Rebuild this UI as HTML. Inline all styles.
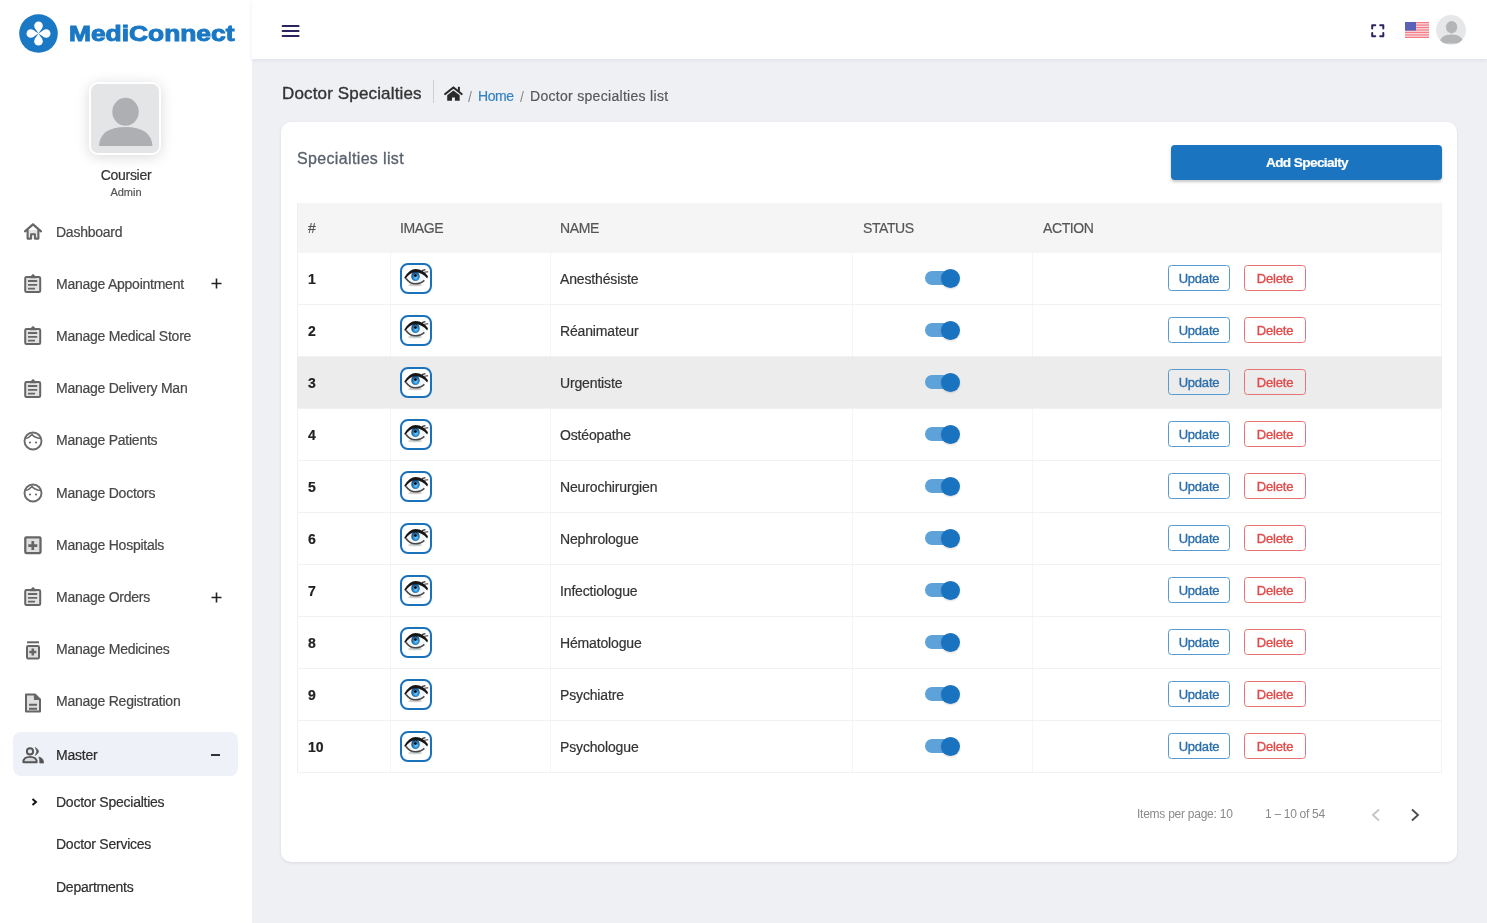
<!DOCTYPE html>
<html><head><meta charset="utf-8"><title>MediConnect - Doctor Specialties</title><style>
*{margin:0;padding:0;box-sizing:border-box}
html,body{width:1487px;height:923px;overflow:hidden;background:#eef0f4;font-family:"Liberation Sans", sans-serif}
.t{position:absolute;line-height:1;white-space:nowrap;will-change:transform;-webkit-text-stroke-width:0.2px}
.a{position:absolute;display:block}
.box{position:absolute}
</style></head>
<body>
<div class="box" style="left:0;top:0;width:252px;height:923px;background:#fff;box-shadow:1px 0 0 #f1f1f4"></div>
<div class="box" style="left:252px;top:0;width:1235px;height:59px;background:#fff;box-shadow:0 1px 4px rgba(90,90,170,.11)"></div>
<svg class="a" style="left:19px;top:14px" width="39" height="39" viewBox="0 0 39 39"><circle cx="19.5" cy="19.5" r="19.3" fill="#1a78c4"/><g fill="#fff"><circle cx="19.50" cy="11.80" r="4.3"/><path d="M19.5 19.5 L23.07 14.20 L19.50 11.80 L15.93 14.20 Z"/><circle cx="27.20" cy="19.50" r="4.3"/><path d="M19.5 19.5 L24.80 23.07 L27.20 19.50 L24.80 15.93 Z"/><circle cx="19.50" cy="27.20" r="4.3"/><path d="M19.5 19.5 L15.93 24.80 L19.50 27.20 L23.07 24.80 Z"/><circle cx="11.80" cy="19.50" r="4.3"/><path d="M19.5 19.5 L14.20 15.93 L11.80 19.50 L14.20 23.07 Z"/></g></svg>
<div class="t" style="left:69px;top:22.68px;font-size:22px;color:#1a78c4;font-weight:700;transform:scaleX(1.198);transform-origin:0 0;-webkit-text-stroke:1px #1a78c4;">MediConnect</div>
<div class="box" style="left:89.3px;top:82.2px;width:71.5px;height:73px;border-radius:9px;background:#e4e5e7;border:2.6px solid #fff;box-shadow:0 2px 14px rgba(0,0,0,.15);overflow:hidden">
<svg class="a" style="left:0.7px;top:0.3px" width="67" height="67" viewBox="0 0 67 67"><ellipse cx="33.5" cy="27.8" rx="13.2" ry="14" fill="#adafb2"/><path d="M7 62 Q8 43 33.5 43 Q59 43 60.5 62 Z" fill="#adafb2"/></svg></div>
<div class="t" style="left:-74.4px;width:400px;text-align:center;top:167.75px;font-size:14px;color:#333;font-weight:400;letter-spacing:-0.3px;">Coursier</div>
<div class="t" style="left:-74.4px;width:400px;text-align:center;top:187.19px;font-size:11px;color:#555;font-weight:400;">Admin</div>
<svg class="a" style="left:24px;top:223px" width="18" height="17" viewBox="0 0 18 17"><path d="M9 1.4 L1 8.4 M9 1.4 L17 8.4" stroke="#666" stroke-width="2.2" fill="none" stroke-linecap="round"/><path d="M3.6 7 V15.6 H7.1 V11.2 H10.9 V15.6 H14.4 V7" stroke="#666" stroke-width="2.1" fill="#e4e4e4" stroke-linejoin="round"/></svg>
<div class="t" style="left:55.9px;top:224.85px;font-size:14px;color:#474747;font-weight:400;letter-spacing:-0.25px;">Dashboard</div>
<svg class="a" style="left:24px;top:274px" width="18" height="20" viewBox="0 0 18 20"><rect x="1.2" y="3.1" width="15" height="14.9" rx="1.3" stroke="#666" stroke-width="2" fill="#e2e2e2"/><path d="M6 3.6 L9 0.7 L12 3.6 Z" stroke="#666" stroke-width="1.2" fill="#666" stroke-linejoin="round"/><path d="M4 7 H13.2 M4 10.8 H13.2 M4 14.6 H11" stroke="#666" stroke-width="1.8"/></svg>
<div class="t" style="left:55.9px;top:276.75px;font-size:14px;color:#474747;font-weight:400;letter-spacing:-0.25px;">Manage Appointment</div>
<svg class="a" style="left:211px;top:278.4px" width="11" height="11" viewBox="0 0 11 11"><path d="M5.5 0.5 V10.5 M0.5 5.5 H10.5" stroke="#222" stroke-width="1.6"/></svg>
<svg class="a" style="left:24px;top:326.3px" width="18" height="20" viewBox="0 0 18 20"><rect x="1.2" y="3.1" width="15" height="14.9" rx="1.3" stroke="#666" stroke-width="2" fill="#e2e2e2"/><path d="M6 3.6 L9 0.7 L12 3.6 Z" stroke="#666" stroke-width="1.2" fill="#666" stroke-linejoin="round"/><path d="M4 7 H13.2 M4 10.8 H13.2 M4 14.6 H11" stroke="#666" stroke-width="1.8"/></svg>
<div class="t" style="left:55.9px;top:329.05px;font-size:14px;color:#474747;font-weight:400;letter-spacing:-0.25px;">Manage Medical Store</div>
<svg class="a" style="left:24px;top:378.5px" width="18" height="20" viewBox="0 0 18 20"><rect x="1.2" y="3.1" width="15" height="14.9" rx="1.3" stroke="#666" stroke-width="2" fill="#e2e2e2"/><path d="M6 3.6 L9 0.7 L12 3.6 Z" stroke="#666" stroke-width="1.2" fill="#666" stroke-linejoin="round"/><path d="M4 7 H13.2 M4 10.8 H13.2 M4 14.6 H11" stroke="#666" stroke-width="1.8"/></svg>
<div class="t" style="left:55.9px;top:381.25px;font-size:14px;color:#474747;font-weight:400;letter-spacing:-0.25px;">Manage Delivery Man</div>
<svg class="a" style="left:23px;top:430.5px" width="20" height="20" viewBox="0 0 20 20"><circle cx="10" cy="10" r="8.5" stroke="#6b6b6b" stroke-width="1.9" fill="none"/><path d="M2.5 7.5 Q6 7 9 3.5 Q12 7 17.5 7.5" stroke="#6b6b6b" stroke-width="1.7" fill="none"/><circle cx="7" cy="11.5" r="1.1" fill="#6b6b6b"/><circle cx="13" cy="11.5" r="1.1" fill="#6b6b6b"/></svg>
<div class="t" style="left:55.9px;top:433.35px;font-size:14px;color:#474747;font-weight:400;letter-spacing:-0.25px;">Manage Patients</div>
<svg class="a" style="left:23px;top:482.7px" width="20" height="20" viewBox="0 0 20 20"><circle cx="10" cy="10" r="8.5" stroke="#6b6b6b" stroke-width="1.9" fill="none"/><path d="M2.5 7.5 Q6 7 9 3.5 Q12 7 17.5 7.5" stroke="#6b6b6b" stroke-width="1.7" fill="none"/><circle cx="7" cy="11.5" r="1.1" fill="#6b6b6b"/><circle cx="13" cy="11.5" r="1.1" fill="#6b6b6b"/></svg>
<div class="t" style="left:55.9px;top:485.55px;font-size:14px;color:#474747;font-weight:400;letter-spacing:-0.25px;">Manage Doctors</div>
<svg class="a" style="left:24px;top:536px" width="18" height="19" viewBox="0 0 18 19"><rect x="1.3" y="1.3" width="15.2" height="15.8" rx="1" stroke="#666" stroke-width="2.3" fill="#e0e0e0"/><path d="M8.8 5 V14 M4.3 9.6 H13.3" stroke="#666" stroke-width="2.7"/></svg>
<div class="t" style="left:55.9px;top:537.75px;font-size:14px;color:#474747;font-weight:400;letter-spacing:-0.25px;">Manage Hospitals</div>
<svg class="a" style="left:24px;top:587.2px" width="18" height="20" viewBox="0 0 18 20"><rect x="1.2" y="3.1" width="15" height="14.9" rx="1.3" stroke="#666" stroke-width="2" fill="#e2e2e2"/><path d="M6 3.6 L9 0.7 L12 3.6 Z" stroke="#666" stroke-width="1.2" fill="#666" stroke-linejoin="round"/><path d="M4 7 H13.2 M4 10.8 H13.2 M4 14.6 H11" stroke="#666" stroke-width="1.8"/></svg>
<div class="t" style="left:55.9px;top:589.95px;font-size:14px;color:#474747;font-weight:400;letter-spacing:-0.25px;">Manage Orders</div>
<svg class="a" style="left:211px;top:591.6px" width="11" height="11" viewBox="0 0 11 11"><path d="M5.5 0.5 V10.5 M0.5 5.5 H10.5" stroke="#222" stroke-width="1.6"/></svg>
<svg class="a" style="left:24px;top:640px" width="18" height="20" viewBox="0 0 18 20"><path d="M3 2.3 H15" stroke="#666" stroke-width="2"/><rect x="3" y="6.1" width="12" height="12.4" rx="1.2" stroke="#666" stroke-width="2" fill="#e0e0e0"/><path d="M8.8 8.6 V15.6 M5.3 12.1 H12.3" stroke="#666" stroke-width="2.5"/></svg>
<div class="t" style="left:55.9px;top:642.35px;font-size:14px;color:#474747;font-weight:400;letter-spacing:-0.25px;">Manage Medicines</div>
<svg class="a" style="left:24px;top:692.5px" width="18" height="20" viewBox="0 0 18 20"><path d="M2 1.5 H11 L16 6.5 V18.5 H2 Z" stroke="#666" stroke-width="2" fill="#e0e0e0" stroke-linejoin="round"/><path d="M10.7 1.8 V6.3 H15.7 Z" stroke="#666" stroke-width="1.6" fill="#666" stroke-linejoin="round"/><path d="M5 11.8 H13 M5 15.7 H13" stroke="#666" stroke-width="2"/></svg>
<div class="t" style="left:55.9px;top:694.35px;font-size:14px;color:#474747;font-weight:400;letter-spacing:-0.25px;">Manage Registration</div>
<div class="box" style="left:13px;top:732px;width:225px;height:44px;border-radius:8px;background:#eff1f9"></div>
<svg class="a" style="left:21px;top:746px" width="24" height="18" viewBox="0 0 24 18"><circle cx="9" cy="5.4" r="3.1" stroke="#555" stroke-width="1.9" fill="#e6e7ee"/><path d="M2.4 16.3 Q2.2 10.9 9 10.9 Q15.8 10.9 15.7 16.3 Z" stroke="#555" stroke-width="1.9" fill="#d8d9de" stroke-linejoin="round"/><path d="M14.4 1.5 Q20.6 5.4 14.4 9.3 Q17.2 5.4 14.4 1.5 Z" fill="#555" stroke="#555" stroke-width="0.8" stroke-linejoin="round"/><path d="M17.8 11 Q22.8 12 22.6 17.1 H18.7 Q18.9 13.6 17.8 11 Z" fill="#555" stroke="#555" stroke-width="0.6" stroke-linejoin="round"/></svg>
<div class="t" style="left:55.9px;top:747.65px;font-size:14px;color:#2a2a2a;font-weight:400;letter-spacing:-0.2px;">Master</div>
<div class="box" style="left:211px;top:754.2px;width:9px;height:1.7px;background:#333"></div>
<svg class="a" style="left:30.5px;top:798px" width="7" height="8" viewBox="0 0 7 8"><path d="M1.5 1 L5 4 L1.5 7" stroke="#111" stroke-width="1.9" fill="none"/></svg>
<div class="t" style="left:55.9px;top:794.75px;font-size:14px;color:#2f2f2f;font-weight:400;letter-spacing:-0.25px;">Doctor Specialties</div>
<div class="t" style="left:55.9px;top:837.35px;font-size:14px;color:#2f2f2f;font-weight:400;letter-spacing:-0.25px;">Doctor Services</div>
<div class="t" style="left:55.9px;top:879.65px;font-size:14px;color:#2f2f2f;font-weight:400;letter-spacing:-0.25px;">Departments</div>
<svg class="a" style="left:281px;top:24px" width="19" height="14" viewBox="0 0 19 14"><path d="M1.6 2.1 H17.6 M1.6 7 H17.6 M1.6 11.9 H17.6" stroke="#2a2560" stroke-width="2" stroke-linecap="round"/></svg>
<svg class="a" style="left:1370.5px;top:23.5px" width="14" height="14" viewBox="0 0 14 14"><path d="M1.2 4.4 V1.2 H4.3 M9.2 1.2 H12.3 V4.4 M12.3 9.0 V12.3 H9.2 M4.3 12.3 H1.2 V9.0" stroke="#2a2660" stroke-width="2" fill="none" stroke-linecap="round" stroke-linejoin="round"/></svg>
<svg class="a" style="left:1405px;top:22px" width="24" height="16" viewBox="0 0 24 16"><rect width="24" height="16" fill="#fbdde0"/><rect y="0.000" width="24" height="1.231" fill="#f27d87"/><rect y="2.462" width="24" height="1.231" fill="#f27d87"/><rect y="4.923" width="24" height="1.231" fill="#f27d87"/><rect y="7.385" width="24" height="1.231" fill="#f27d87"/><rect y="9.846" width="24" height="1.231" fill="#f27d87"/><rect y="12.308" width="24" height="1.231" fill="#f27d87"/><rect y="14.769" width="24" height="1.231" fill="#f27d87"/><rect width="11" height="8.6" fill="#5a62b6"/></svg>
<div class="box" style="left:1436px;top:15px;width:30px;height:30px;border-radius:50%;background:#e6e7e9;overflow:hidden">
<svg class="a" style="left:0;top:0" width="30" height="30" viewBox="0 0 30 30"><ellipse cx="15.6" cy="12.2" rx="5.6" ry="6.2" fill="#b4b5b7"/><path d="M3.5 28.5 Q4 19.5 15.5 19.5 Q27 19.5 27.5 28.5 Z" fill="#b4b5b7"/></svg></div>
<div class="t" style="left:282.4px;top:84.51px;font-size:17px;color:#333;font-weight:400;letter-spacing:0.15px;-webkit-text-stroke-width:0.35px;">Doctor Specialties</div>
<div class="box" style="left:433px;top:80px;width:1px;height:23px;background:#cfd0d4"></div>
<svg class="a" style="left:443.5px;top:86px" width="20" height="16" viewBox="0 0 20 16"><path d="M1.2 8 L9.4 1.5 L17.6 8" stroke="#2a2a2a" stroke-width="2.2" fill="none" stroke-linecap="round" stroke-linejoin="round"/><rect x="13.9" y="0.8" width="2" height="4.5" fill="#2a2a2a"/><path d="M3.2 9.2 L9.4 4.6 L15.7 9.2 V14.8 H10.9 V11.4 H8 V14.8 H3.2 Z" fill="#2a2a2a"/></svg>
<div class="t" style="left:467.8px;top:89.65px;font-size:14px;color:#8a8a8a;font-weight:400;-webkit-text-stroke-width:0;">/</div>
<div class="t" style="left:478px;top:89.35px;font-size:14px;color:#3482c4;font-weight:400;letter-spacing:-0.4px;">Home</div>
<div class="t" style="left:520px;top:89.65px;font-size:14px;color:#8a8a8a;font-weight:400;-webkit-text-stroke-width:0;">/</div>
<div class="t" style="left:530px;top:89.35px;font-size:14px;color:#585858;font-weight:400;letter-spacing:0.3px;">Doctor specialties list</div>
<div class="box" style="left:281px;top:122px;width:1176px;height:740px;background:#fff;border-radius:10px;box-shadow:0 1px 3px rgba(0,0,0,.09)"></div>
<div class="t" style="left:297.4px;top:151.46px;font-size:16px;color:#59616d;font-weight:400;letter-spacing:0.35px;-webkit-text-stroke:0.3px #59616d;">Specialties list</div>
<div class="box" style="left:1171px;top:145px;width:271px;height:34.5px;background:#1a74bf;border-radius:4px;box-shadow:0 2px 3px rgba(0,0,0,.22)"></div>
<div class="t" style="left:1106.5px;width:400px;text-align:center;top:156.15px;font-size:14px;color:#fff;font-weight:700;letter-spacing:-0.6px;font-size:13.6px;">Add Specialty</div>
<div class="box" style="left:297px;top:203px;width:1145px;height:50px;background:#f5f5f5"></div>
<div class="box" style="left:297px;top:203px;width:1px;height:570px;background:#f0f0f0"></div>
<div class="box" style="left:1441px;top:203px;width:1px;height:570px;background:#f3f3f3"></div>
<div class="box" style="left:390px;top:253px;width:1px;height:520px;background:#f5f5f5"></div>
<div class="box" style="left:550px;top:253px;width:1px;height:520px;background:#f5f5f5"></div>
<div class="box" style="left:852px;top:253px;width:1px;height:520px;background:#f5f5f5"></div>
<div class="box" style="left:1032px;top:253px;width:1px;height:520px;background:#f5f5f5"></div>
<div class="t" style="left:308px;top:221.25px;font-size:14px;color:#555;font-weight:400;letter-spacing:-0.4px;">#</div>
<div class="t" style="left:399.5px;top:221.25px;font-size:14px;color:#555;font-weight:400;letter-spacing:-0.4px;">IMAGE</div>
<div class="t" style="left:560px;top:221.25px;font-size:14px;color:#555;font-weight:400;letter-spacing:-0.4px;">NAME</div>
<div class="t" style="left:863px;top:221.25px;font-size:14px;color:#555;font-weight:400;letter-spacing:-0.4px;">STATUS</div>
<div class="t" style="left:1043px;top:221.25px;font-size:14px;color:#555;font-weight:400;letter-spacing:-0.4px;">ACTION</div>
<div class="box" style="left:297px;top:304px;width:1145px;height:1px;background:#f2f2f2"></div>
<div class="t" style="left:307.8px;top:271.75px;font-size:14px;color:#222;font-weight:700;">1</div>
<div class="box" style="left:400.1px;top:263.2px;width:31.7px;height:30.6px;border:2.8px solid #1a72bc;border-radius:8px;background:#fff;overflow:hidden"><div class="a" style="left:-2.8px;top:-2.8px"><svg width="32" height="32" viewBox="-1.2 -1 32 32"><defs><radialGradient id="ir0" cx="0.55" cy="0.6" r="0.6"><stop offset="0" stop-color="#7fd4ff"/><stop offset="0.45" stop-color="#2e94dc"/><stop offset="1" stop-color="#0c3d70"/></radialGradient></defs>
<ellipse cx="15" cy="22" rx="7" ry="1.3" fill="#cfcfcf"/>
<path d="M5 14.5 Q10 8 15.5 7.5 Q22 7.5 27 13.8 Q21 20.5 15 20.5 Q8.5 20.5 5 14.5 Z" fill="#f6f6f6"/>
<ellipse cx="15.3" cy="13.4" rx="4.2" ry="4.7" fill="url(#ir0)"/><circle cx="15.2" cy="12.6" r="1.4" fill="#050505"/>
<path d="M4 14.8 Q9 6 15.5 6 Q23 6.2 27.8 13.2 L27 15.4 Q22 9.4 15.5 9.2 Q9.5 9.4 5.2 15.9 Z" fill="#161616"/>
<path d="M21.5 7.6 L25.2 6.6 M24 9.2 L28 8.8" stroke="#333" stroke-width="1.1"/>
<path d="M5.8 15.5 Q9.5 20.8 15 20.8 Q20.5 20.8 24.2 17.4" stroke="#484848" stroke-width="1.6" fill="none"/></svg></div></div>
<div class="t" style="left:560.4px;top:271.55px;font-size:14px;color:#333;font-weight:400;letter-spacing:-0.15px;">Anesthésiste</div>
<div class="box" style="left:925px;top:271.3px;width:34px;height:14px;border-radius:7px;background:#5ea2da"></div>
<div class="box" style="left:941px;top:268.8px;width:19px;height:19px;border-radius:50%;background:#1a73bf;box-shadow:0 1px 2px rgba(0,0,0,.15)"></div>
<div class="box" style="left:1168px;top:265px;width:62px;height:26px;border:1px solid #559bd1;border-radius:3.5px"></div>
<div class="t" style="left:999px;width:400px;text-align:center;top:271.80px;font-size:13px;color:#2b6fab;font-weight:400;letter-spacing:-0.2px;-webkit-text-stroke:0.35px #2b6fab;">Update</div>
<div class="box" style="left:1244px;top:265px;width:62px;height:26px;border:1px solid #e97272;border-radius:3.5px"></div>
<div class="t" style="left:1075px;width:400px;text-align:center;top:271.80px;font-size:13px;color:#e04a4a;font-weight:400;letter-spacing:-0.2px;-webkit-text-stroke:0.35px #e04a4a;">Delete</div>
<div class="box" style="left:297px;top:356px;width:1145px;height:1px;background:#f2f2f2"></div>
<div class="t" style="left:307.8px;top:323.75px;font-size:14px;color:#222;font-weight:700;">2</div>
<div class="box" style="left:400.1px;top:315.2px;width:31.7px;height:30.6px;border:2.8px solid #1a72bc;border-radius:8px;background:#fff;overflow:hidden"><div class="a" style="left:-2.8px;top:-2.8px"><svg width="32" height="32" viewBox="-1.2 -1 32 32"><defs><radialGradient id="ir1" cx="0.55" cy="0.6" r="0.6"><stop offset="0" stop-color="#7fd4ff"/><stop offset="0.45" stop-color="#2e94dc"/><stop offset="1" stop-color="#0c3d70"/></radialGradient></defs>
<ellipse cx="15" cy="22" rx="7" ry="1.3" fill="#cfcfcf"/>
<path d="M5 14.5 Q10 8 15.5 7.5 Q22 7.5 27 13.8 Q21 20.5 15 20.5 Q8.5 20.5 5 14.5 Z" fill="#f6f6f6"/>
<ellipse cx="15.3" cy="13.4" rx="4.2" ry="4.7" fill="url(#ir1)"/><circle cx="15.2" cy="12.6" r="1.4" fill="#050505"/>
<path d="M4 14.8 Q9 6 15.5 6 Q23 6.2 27.8 13.2 L27 15.4 Q22 9.4 15.5 9.2 Q9.5 9.4 5.2 15.9 Z" fill="#161616"/>
<path d="M21.5 7.6 L25.2 6.6 M24 9.2 L28 8.8" stroke="#333" stroke-width="1.1"/>
<path d="M5.8 15.5 Q9.5 20.8 15 20.8 Q20.5 20.8 24.2 17.4" stroke="#484848" stroke-width="1.6" fill="none"/></svg></div></div>
<div class="t" style="left:560.4px;top:323.55px;font-size:14px;color:#333;font-weight:400;letter-spacing:-0.15px;">Réanimateur</div>
<div class="box" style="left:925px;top:323.3px;width:34px;height:14px;border-radius:7px;background:#5ea2da"></div>
<div class="box" style="left:941px;top:320.8px;width:19px;height:19px;border-radius:50%;background:#1a73bf;box-shadow:0 1px 2px rgba(0,0,0,.15)"></div>
<div class="box" style="left:1168px;top:317px;width:62px;height:26px;border:1px solid #559bd1;border-radius:3.5px"></div>
<div class="t" style="left:999px;width:400px;text-align:center;top:323.80px;font-size:13px;color:#2b6fab;font-weight:400;letter-spacing:-0.2px;-webkit-text-stroke:0.35px #2b6fab;">Update</div>
<div class="box" style="left:1244px;top:317px;width:62px;height:26px;border:1px solid #e97272;border-radius:3.5px"></div>
<div class="t" style="left:1075px;width:400px;text-align:center;top:323.80px;font-size:13px;color:#e04a4a;font-weight:400;letter-spacing:-0.2px;-webkit-text-stroke:0.35px #e04a4a;">Delete</div>
<div class="box" style="left:297px;top:357px;width:1145px;height:52px;background:#ececec"></div>
<div class="box" style="left:297px;top:408px;width:1145px;height:1px;background:#f2f2f2"></div>
<div class="t" style="left:307.8px;top:375.75px;font-size:14px;color:#222;font-weight:700;">3</div>
<div class="box" style="left:400.1px;top:367.2px;width:31.7px;height:30.6px;border:2.8px solid #1a72bc;border-radius:8px;background:#fff;overflow:hidden"><div class="a" style="left:-2.8px;top:-2.8px"><svg width="32" height="32" viewBox="-1.2 -1 32 32"><defs><radialGradient id="ir2" cx="0.55" cy="0.6" r="0.6"><stop offset="0" stop-color="#7fd4ff"/><stop offset="0.45" stop-color="#2e94dc"/><stop offset="1" stop-color="#0c3d70"/></radialGradient></defs>
<ellipse cx="15" cy="22" rx="7" ry="1.3" fill="#cfcfcf"/>
<path d="M5 14.5 Q10 8 15.5 7.5 Q22 7.5 27 13.8 Q21 20.5 15 20.5 Q8.5 20.5 5 14.5 Z" fill="#f6f6f6"/>
<ellipse cx="15.3" cy="13.4" rx="4.2" ry="4.7" fill="url(#ir2)"/><circle cx="15.2" cy="12.6" r="1.4" fill="#050505"/>
<path d="M4 14.8 Q9 6 15.5 6 Q23 6.2 27.8 13.2 L27 15.4 Q22 9.4 15.5 9.2 Q9.5 9.4 5.2 15.9 Z" fill="#161616"/>
<path d="M21.5 7.6 L25.2 6.6 M24 9.2 L28 8.8" stroke="#333" stroke-width="1.1"/>
<path d="M5.8 15.5 Q9.5 20.8 15 20.8 Q20.5 20.8 24.2 17.4" stroke="#484848" stroke-width="1.6" fill="none"/></svg></div></div>
<div class="t" style="left:560.4px;top:375.55px;font-size:14px;color:#333;font-weight:400;letter-spacing:-0.15px;">Urgentiste</div>
<div class="box" style="left:925px;top:375.3px;width:34px;height:14px;border-radius:7px;background:#5ea2da"></div>
<div class="box" style="left:941px;top:372.8px;width:19px;height:19px;border-radius:50%;background:#1a73bf;box-shadow:0 1px 2px rgba(0,0,0,.15)"></div>
<div class="box" style="left:1168px;top:369px;width:62px;height:26px;border:1px solid #559bd1;border-radius:3.5px"></div>
<div class="t" style="left:999px;width:400px;text-align:center;top:375.80px;font-size:13px;color:#2b6fab;font-weight:400;letter-spacing:-0.2px;-webkit-text-stroke:0.35px #2b6fab;">Update</div>
<div class="box" style="left:1244px;top:369px;width:62px;height:26px;border:1px solid #e97272;border-radius:3.5px"></div>
<div class="t" style="left:1075px;width:400px;text-align:center;top:375.80px;font-size:13px;color:#e04a4a;font-weight:400;letter-spacing:-0.2px;-webkit-text-stroke:0.35px #e04a4a;">Delete</div>
<div class="box" style="left:297px;top:460px;width:1145px;height:1px;background:#f2f2f2"></div>
<div class="t" style="left:307.8px;top:427.75px;font-size:14px;color:#222;font-weight:700;">4</div>
<div class="box" style="left:400.1px;top:419.2px;width:31.7px;height:30.6px;border:2.8px solid #1a72bc;border-radius:8px;background:#fff;overflow:hidden"><div class="a" style="left:-2.8px;top:-2.8px"><svg width="32" height="32" viewBox="-1.2 -1 32 32"><defs><radialGradient id="ir3" cx="0.55" cy="0.6" r="0.6"><stop offset="0" stop-color="#7fd4ff"/><stop offset="0.45" stop-color="#2e94dc"/><stop offset="1" stop-color="#0c3d70"/></radialGradient></defs>
<ellipse cx="15" cy="22" rx="7" ry="1.3" fill="#cfcfcf"/>
<path d="M5 14.5 Q10 8 15.5 7.5 Q22 7.5 27 13.8 Q21 20.5 15 20.5 Q8.5 20.5 5 14.5 Z" fill="#f6f6f6"/>
<ellipse cx="15.3" cy="13.4" rx="4.2" ry="4.7" fill="url(#ir3)"/><circle cx="15.2" cy="12.6" r="1.4" fill="#050505"/>
<path d="M4 14.8 Q9 6 15.5 6 Q23 6.2 27.8 13.2 L27 15.4 Q22 9.4 15.5 9.2 Q9.5 9.4 5.2 15.9 Z" fill="#161616"/>
<path d="M21.5 7.6 L25.2 6.6 M24 9.2 L28 8.8" stroke="#333" stroke-width="1.1"/>
<path d="M5.8 15.5 Q9.5 20.8 15 20.8 Q20.5 20.8 24.2 17.4" stroke="#484848" stroke-width="1.6" fill="none"/></svg></div></div>
<div class="t" style="left:560.4px;top:427.55px;font-size:14px;color:#333;font-weight:400;letter-spacing:-0.15px;">Ostéopathe</div>
<div class="box" style="left:925px;top:427.3px;width:34px;height:14px;border-radius:7px;background:#5ea2da"></div>
<div class="box" style="left:941px;top:424.8px;width:19px;height:19px;border-radius:50%;background:#1a73bf;box-shadow:0 1px 2px rgba(0,0,0,.15)"></div>
<div class="box" style="left:1168px;top:421px;width:62px;height:26px;border:1px solid #559bd1;border-radius:3.5px"></div>
<div class="t" style="left:999px;width:400px;text-align:center;top:427.80px;font-size:13px;color:#2b6fab;font-weight:400;letter-spacing:-0.2px;-webkit-text-stroke:0.35px #2b6fab;">Update</div>
<div class="box" style="left:1244px;top:421px;width:62px;height:26px;border:1px solid #e97272;border-radius:3.5px"></div>
<div class="t" style="left:1075px;width:400px;text-align:center;top:427.80px;font-size:13px;color:#e04a4a;font-weight:400;letter-spacing:-0.2px;-webkit-text-stroke:0.35px #e04a4a;">Delete</div>
<div class="box" style="left:297px;top:512px;width:1145px;height:1px;background:#f2f2f2"></div>
<div class="t" style="left:307.8px;top:479.75px;font-size:14px;color:#222;font-weight:700;">5</div>
<div class="box" style="left:400.1px;top:471.2px;width:31.7px;height:30.6px;border:2.8px solid #1a72bc;border-radius:8px;background:#fff;overflow:hidden"><div class="a" style="left:-2.8px;top:-2.8px"><svg width="32" height="32" viewBox="-1.2 -1 32 32"><defs><radialGradient id="ir4" cx="0.55" cy="0.6" r="0.6"><stop offset="0" stop-color="#7fd4ff"/><stop offset="0.45" stop-color="#2e94dc"/><stop offset="1" stop-color="#0c3d70"/></radialGradient></defs>
<ellipse cx="15" cy="22" rx="7" ry="1.3" fill="#cfcfcf"/>
<path d="M5 14.5 Q10 8 15.5 7.5 Q22 7.5 27 13.8 Q21 20.5 15 20.5 Q8.5 20.5 5 14.5 Z" fill="#f6f6f6"/>
<ellipse cx="15.3" cy="13.4" rx="4.2" ry="4.7" fill="url(#ir4)"/><circle cx="15.2" cy="12.6" r="1.4" fill="#050505"/>
<path d="M4 14.8 Q9 6 15.5 6 Q23 6.2 27.8 13.2 L27 15.4 Q22 9.4 15.5 9.2 Q9.5 9.4 5.2 15.9 Z" fill="#161616"/>
<path d="M21.5 7.6 L25.2 6.6 M24 9.2 L28 8.8" stroke="#333" stroke-width="1.1"/>
<path d="M5.8 15.5 Q9.5 20.8 15 20.8 Q20.5 20.8 24.2 17.4" stroke="#484848" stroke-width="1.6" fill="none"/></svg></div></div>
<div class="t" style="left:560.4px;top:479.55px;font-size:14px;color:#333;font-weight:400;letter-spacing:-0.15px;">Neurochirurgien</div>
<div class="box" style="left:925px;top:479.3px;width:34px;height:14px;border-radius:7px;background:#5ea2da"></div>
<div class="box" style="left:941px;top:476.8px;width:19px;height:19px;border-radius:50%;background:#1a73bf;box-shadow:0 1px 2px rgba(0,0,0,.15)"></div>
<div class="box" style="left:1168px;top:473px;width:62px;height:26px;border:1px solid #559bd1;border-radius:3.5px"></div>
<div class="t" style="left:999px;width:400px;text-align:center;top:479.80px;font-size:13px;color:#2b6fab;font-weight:400;letter-spacing:-0.2px;-webkit-text-stroke:0.35px #2b6fab;">Update</div>
<div class="box" style="left:1244px;top:473px;width:62px;height:26px;border:1px solid #e97272;border-radius:3.5px"></div>
<div class="t" style="left:1075px;width:400px;text-align:center;top:479.80px;font-size:13px;color:#e04a4a;font-weight:400;letter-spacing:-0.2px;-webkit-text-stroke:0.35px #e04a4a;">Delete</div>
<div class="box" style="left:297px;top:564px;width:1145px;height:1px;background:#f2f2f2"></div>
<div class="t" style="left:307.8px;top:531.75px;font-size:14px;color:#222;font-weight:700;">6</div>
<div class="box" style="left:400.1px;top:523.2px;width:31.7px;height:30.6px;border:2.8px solid #1a72bc;border-radius:8px;background:#fff;overflow:hidden"><div class="a" style="left:-2.8px;top:-2.8px"><svg width="32" height="32" viewBox="-1.2 -1 32 32"><defs><radialGradient id="ir5" cx="0.55" cy="0.6" r="0.6"><stop offset="0" stop-color="#7fd4ff"/><stop offset="0.45" stop-color="#2e94dc"/><stop offset="1" stop-color="#0c3d70"/></radialGradient></defs>
<ellipse cx="15" cy="22" rx="7" ry="1.3" fill="#cfcfcf"/>
<path d="M5 14.5 Q10 8 15.5 7.5 Q22 7.5 27 13.8 Q21 20.5 15 20.5 Q8.5 20.5 5 14.5 Z" fill="#f6f6f6"/>
<ellipse cx="15.3" cy="13.4" rx="4.2" ry="4.7" fill="url(#ir5)"/><circle cx="15.2" cy="12.6" r="1.4" fill="#050505"/>
<path d="M4 14.8 Q9 6 15.5 6 Q23 6.2 27.8 13.2 L27 15.4 Q22 9.4 15.5 9.2 Q9.5 9.4 5.2 15.9 Z" fill="#161616"/>
<path d="M21.5 7.6 L25.2 6.6 M24 9.2 L28 8.8" stroke="#333" stroke-width="1.1"/>
<path d="M5.8 15.5 Q9.5 20.8 15 20.8 Q20.5 20.8 24.2 17.4" stroke="#484848" stroke-width="1.6" fill="none"/></svg></div></div>
<div class="t" style="left:560.4px;top:531.55px;font-size:14px;color:#333;font-weight:400;letter-spacing:-0.15px;">Nephrologue</div>
<div class="box" style="left:925px;top:531.3px;width:34px;height:14px;border-radius:7px;background:#5ea2da"></div>
<div class="box" style="left:941px;top:528.8px;width:19px;height:19px;border-radius:50%;background:#1a73bf;box-shadow:0 1px 2px rgba(0,0,0,.15)"></div>
<div class="box" style="left:1168px;top:525px;width:62px;height:26px;border:1px solid #559bd1;border-radius:3.5px"></div>
<div class="t" style="left:999px;width:400px;text-align:center;top:531.80px;font-size:13px;color:#2b6fab;font-weight:400;letter-spacing:-0.2px;-webkit-text-stroke:0.35px #2b6fab;">Update</div>
<div class="box" style="left:1244px;top:525px;width:62px;height:26px;border:1px solid #e97272;border-radius:3.5px"></div>
<div class="t" style="left:1075px;width:400px;text-align:center;top:531.80px;font-size:13px;color:#e04a4a;font-weight:400;letter-spacing:-0.2px;-webkit-text-stroke:0.35px #e04a4a;">Delete</div>
<div class="box" style="left:297px;top:616px;width:1145px;height:1px;background:#f2f2f2"></div>
<div class="t" style="left:307.8px;top:583.75px;font-size:14px;color:#222;font-weight:700;">7</div>
<div class="box" style="left:400.1px;top:575.2px;width:31.7px;height:30.6px;border:2.8px solid #1a72bc;border-radius:8px;background:#fff;overflow:hidden"><div class="a" style="left:-2.8px;top:-2.8px"><svg width="32" height="32" viewBox="-1.2 -1 32 32"><defs><radialGradient id="ir6" cx="0.55" cy="0.6" r="0.6"><stop offset="0" stop-color="#7fd4ff"/><stop offset="0.45" stop-color="#2e94dc"/><stop offset="1" stop-color="#0c3d70"/></radialGradient></defs>
<ellipse cx="15" cy="22" rx="7" ry="1.3" fill="#cfcfcf"/>
<path d="M5 14.5 Q10 8 15.5 7.5 Q22 7.5 27 13.8 Q21 20.5 15 20.5 Q8.5 20.5 5 14.5 Z" fill="#f6f6f6"/>
<ellipse cx="15.3" cy="13.4" rx="4.2" ry="4.7" fill="url(#ir6)"/><circle cx="15.2" cy="12.6" r="1.4" fill="#050505"/>
<path d="M4 14.8 Q9 6 15.5 6 Q23 6.2 27.8 13.2 L27 15.4 Q22 9.4 15.5 9.2 Q9.5 9.4 5.2 15.9 Z" fill="#161616"/>
<path d="M21.5 7.6 L25.2 6.6 M24 9.2 L28 8.8" stroke="#333" stroke-width="1.1"/>
<path d="M5.8 15.5 Q9.5 20.8 15 20.8 Q20.5 20.8 24.2 17.4" stroke="#484848" stroke-width="1.6" fill="none"/></svg></div></div>
<div class="t" style="left:560.4px;top:583.55px;font-size:14px;color:#333;font-weight:400;letter-spacing:-0.15px;">Infectiologue</div>
<div class="box" style="left:925px;top:583.3px;width:34px;height:14px;border-radius:7px;background:#5ea2da"></div>
<div class="box" style="left:941px;top:580.8px;width:19px;height:19px;border-radius:50%;background:#1a73bf;box-shadow:0 1px 2px rgba(0,0,0,.15)"></div>
<div class="box" style="left:1168px;top:577px;width:62px;height:26px;border:1px solid #559bd1;border-radius:3.5px"></div>
<div class="t" style="left:999px;width:400px;text-align:center;top:583.80px;font-size:13px;color:#2b6fab;font-weight:400;letter-spacing:-0.2px;-webkit-text-stroke:0.35px #2b6fab;">Update</div>
<div class="box" style="left:1244px;top:577px;width:62px;height:26px;border:1px solid #e97272;border-radius:3.5px"></div>
<div class="t" style="left:1075px;width:400px;text-align:center;top:583.80px;font-size:13px;color:#e04a4a;font-weight:400;letter-spacing:-0.2px;-webkit-text-stroke:0.35px #e04a4a;">Delete</div>
<div class="box" style="left:297px;top:668px;width:1145px;height:1px;background:#f2f2f2"></div>
<div class="t" style="left:307.8px;top:635.75px;font-size:14px;color:#222;font-weight:700;">8</div>
<div class="box" style="left:400.1px;top:627.2px;width:31.7px;height:30.6px;border:2.8px solid #1a72bc;border-radius:8px;background:#fff;overflow:hidden"><div class="a" style="left:-2.8px;top:-2.8px"><svg width="32" height="32" viewBox="-1.2 -1 32 32"><defs><radialGradient id="ir7" cx="0.55" cy="0.6" r="0.6"><stop offset="0" stop-color="#7fd4ff"/><stop offset="0.45" stop-color="#2e94dc"/><stop offset="1" stop-color="#0c3d70"/></radialGradient></defs>
<ellipse cx="15" cy="22" rx="7" ry="1.3" fill="#cfcfcf"/>
<path d="M5 14.5 Q10 8 15.5 7.5 Q22 7.5 27 13.8 Q21 20.5 15 20.5 Q8.5 20.5 5 14.5 Z" fill="#f6f6f6"/>
<ellipse cx="15.3" cy="13.4" rx="4.2" ry="4.7" fill="url(#ir7)"/><circle cx="15.2" cy="12.6" r="1.4" fill="#050505"/>
<path d="M4 14.8 Q9 6 15.5 6 Q23 6.2 27.8 13.2 L27 15.4 Q22 9.4 15.5 9.2 Q9.5 9.4 5.2 15.9 Z" fill="#161616"/>
<path d="M21.5 7.6 L25.2 6.6 M24 9.2 L28 8.8" stroke="#333" stroke-width="1.1"/>
<path d="M5.8 15.5 Q9.5 20.8 15 20.8 Q20.5 20.8 24.2 17.4" stroke="#484848" stroke-width="1.6" fill="none"/></svg></div></div>
<div class="t" style="left:560.4px;top:635.55px;font-size:14px;color:#333;font-weight:400;letter-spacing:-0.15px;">Hématologue</div>
<div class="box" style="left:925px;top:635.3px;width:34px;height:14px;border-radius:7px;background:#5ea2da"></div>
<div class="box" style="left:941px;top:632.8px;width:19px;height:19px;border-radius:50%;background:#1a73bf;box-shadow:0 1px 2px rgba(0,0,0,.15)"></div>
<div class="box" style="left:1168px;top:629px;width:62px;height:26px;border:1px solid #559bd1;border-radius:3.5px"></div>
<div class="t" style="left:999px;width:400px;text-align:center;top:635.80px;font-size:13px;color:#2b6fab;font-weight:400;letter-spacing:-0.2px;-webkit-text-stroke:0.35px #2b6fab;">Update</div>
<div class="box" style="left:1244px;top:629px;width:62px;height:26px;border:1px solid #e97272;border-radius:3.5px"></div>
<div class="t" style="left:1075px;width:400px;text-align:center;top:635.80px;font-size:13px;color:#e04a4a;font-weight:400;letter-spacing:-0.2px;-webkit-text-stroke:0.35px #e04a4a;">Delete</div>
<div class="box" style="left:297px;top:720px;width:1145px;height:1px;background:#f2f2f2"></div>
<div class="t" style="left:307.8px;top:687.75px;font-size:14px;color:#222;font-weight:700;">9</div>
<div class="box" style="left:400.1px;top:679.2px;width:31.7px;height:30.6px;border:2.8px solid #1a72bc;border-radius:8px;background:#fff;overflow:hidden"><div class="a" style="left:-2.8px;top:-2.8px"><svg width="32" height="32" viewBox="-1.2 -1 32 32"><defs><radialGradient id="ir8" cx="0.55" cy="0.6" r="0.6"><stop offset="0" stop-color="#7fd4ff"/><stop offset="0.45" stop-color="#2e94dc"/><stop offset="1" stop-color="#0c3d70"/></radialGradient></defs>
<ellipse cx="15" cy="22" rx="7" ry="1.3" fill="#cfcfcf"/>
<path d="M5 14.5 Q10 8 15.5 7.5 Q22 7.5 27 13.8 Q21 20.5 15 20.5 Q8.5 20.5 5 14.5 Z" fill="#f6f6f6"/>
<ellipse cx="15.3" cy="13.4" rx="4.2" ry="4.7" fill="url(#ir8)"/><circle cx="15.2" cy="12.6" r="1.4" fill="#050505"/>
<path d="M4 14.8 Q9 6 15.5 6 Q23 6.2 27.8 13.2 L27 15.4 Q22 9.4 15.5 9.2 Q9.5 9.4 5.2 15.9 Z" fill="#161616"/>
<path d="M21.5 7.6 L25.2 6.6 M24 9.2 L28 8.8" stroke="#333" stroke-width="1.1"/>
<path d="M5.8 15.5 Q9.5 20.8 15 20.8 Q20.5 20.8 24.2 17.4" stroke="#484848" stroke-width="1.6" fill="none"/></svg></div></div>
<div class="t" style="left:560.4px;top:687.55px;font-size:14px;color:#333;font-weight:400;letter-spacing:-0.15px;">Psychiatre</div>
<div class="box" style="left:925px;top:687.3px;width:34px;height:14px;border-radius:7px;background:#5ea2da"></div>
<div class="box" style="left:941px;top:684.8px;width:19px;height:19px;border-radius:50%;background:#1a73bf;box-shadow:0 1px 2px rgba(0,0,0,.15)"></div>
<div class="box" style="left:1168px;top:681px;width:62px;height:26px;border:1px solid #559bd1;border-radius:3.5px"></div>
<div class="t" style="left:999px;width:400px;text-align:center;top:687.80px;font-size:13px;color:#2b6fab;font-weight:400;letter-spacing:-0.2px;-webkit-text-stroke:0.35px #2b6fab;">Update</div>
<div class="box" style="left:1244px;top:681px;width:62px;height:26px;border:1px solid #e97272;border-radius:3.5px"></div>
<div class="t" style="left:1075px;width:400px;text-align:center;top:687.80px;font-size:13px;color:#e04a4a;font-weight:400;letter-spacing:-0.2px;-webkit-text-stroke:0.35px #e04a4a;">Delete</div>
<div class="box" style="left:297px;top:772px;width:1145px;height:1px;background:#f2f2f2"></div>
<div class="t" style="left:307.8px;top:739.75px;font-size:14px;color:#222;font-weight:700;">10</div>
<div class="box" style="left:400.1px;top:731.2px;width:31.7px;height:30.6px;border:2.8px solid #1a72bc;border-radius:8px;background:#fff;overflow:hidden"><div class="a" style="left:-2.8px;top:-2.8px"><svg width="32" height="32" viewBox="-1.2 -1 32 32"><defs><radialGradient id="ir9" cx="0.55" cy="0.6" r="0.6"><stop offset="0" stop-color="#7fd4ff"/><stop offset="0.45" stop-color="#2e94dc"/><stop offset="1" stop-color="#0c3d70"/></radialGradient></defs>
<ellipse cx="15" cy="22" rx="7" ry="1.3" fill="#cfcfcf"/>
<path d="M5 14.5 Q10 8 15.5 7.5 Q22 7.5 27 13.8 Q21 20.5 15 20.5 Q8.5 20.5 5 14.5 Z" fill="#f6f6f6"/>
<ellipse cx="15.3" cy="13.4" rx="4.2" ry="4.7" fill="url(#ir9)"/><circle cx="15.2" cy="12.6" r="1.4" fill="#050505"/>
<path d="M4 14.8 Q9 6 15.5 6 Q23 6.2 27.8 13.2 L27 15.4 Q22 9.4 15.5 9.2 Q9.5 9.4 5.2 15.9 Z" fill="#161616"/>
<path d="M21.5 7.6 L25.2 6.6 M24 9.2 L28 8.8" stroke="#333" stroke-width="1.1"/>
<path d="M5.8 15.5 Q9.5 20.8 15 20.8 Q20.5 20.8 24.2 17.4" stroke="#484848" stroke-width="1.6" fill="none"/></svg></div></div>
<div class="t" style="left:560.4px;top:739.55px;font-size:14px;color:#333;font-weight:400;letter-spacing:-0.15px;">Psychologue</div>
<div class="box" style="left:925px;top:739.3px;width:34px;height:14px;border-radius:7px;background:#5ea2da"></div>
<div class="box" style="left:941px;top:736.8px;width:19px;height:19px;border-radius:50%;background:#1a73bf;box-shadow:0 1px 2px rgba(0,0,0,.15)"></div>
<div class="box" style="left:1168px;top:733px;width:62px;height:26px;border:1px solid #559bd1;border-radius:3.5px"></div>
<div class="t" style="left:999px;width:400px;text-align:center;top:739.80px;font-size:13px;color:#2b6fab;font-weight:400;letter-spacing:-0.2px;-webkit-text-stroke:0.35px #2b6fab;">Update</div>
<div class="box" style="left:1244px;top:733px;width:62px;height:26px;border:1px solid #e97272;border-radius:3.5px"></div>
<div class="t" style="left:1075px;width:400px;text-align:center;top:739.80px;font-size:13px;color:#e04a4a;font-weight:400;letter-spacing:-0.2px;-webkit-text-stroke:0.35px #e04a4a;">Delete</div>
<div class="t" style="left:1136.5px;top:807.84px;font-size:12px;color:#8a8a8a;font-weight:400;letter-spacing:-0.25px;-webkit-text-stroke-width:0;">Items per page: 10</div>
<div class="t" style="left:1264.7px;top:807.84px;font-size:12px;color:#8a8a8a;font-weight:400;letter-spacing:-0.3px;-webkit-text-stroke-width:0;">1 – 10 of 54</div>
<svg class="a" style="left:1370px;top:808px" width="12" height="14" viewBox="0 0 12 14"><path d="M9 1.5 L3 7 L9 12.5" stroke="#c4c4c4" stroke-width="1.8" fill="none"/></svg>
<svg class="a" style="left:1409px;top:808px" width="12" height="14" viewBox="0 0 12 14"><path d="M3 1.5 L9 7 L3 12.5" stroke="#4a4a4a" stroke-width="1.8" fill="none"/></svg>
</body></html>
